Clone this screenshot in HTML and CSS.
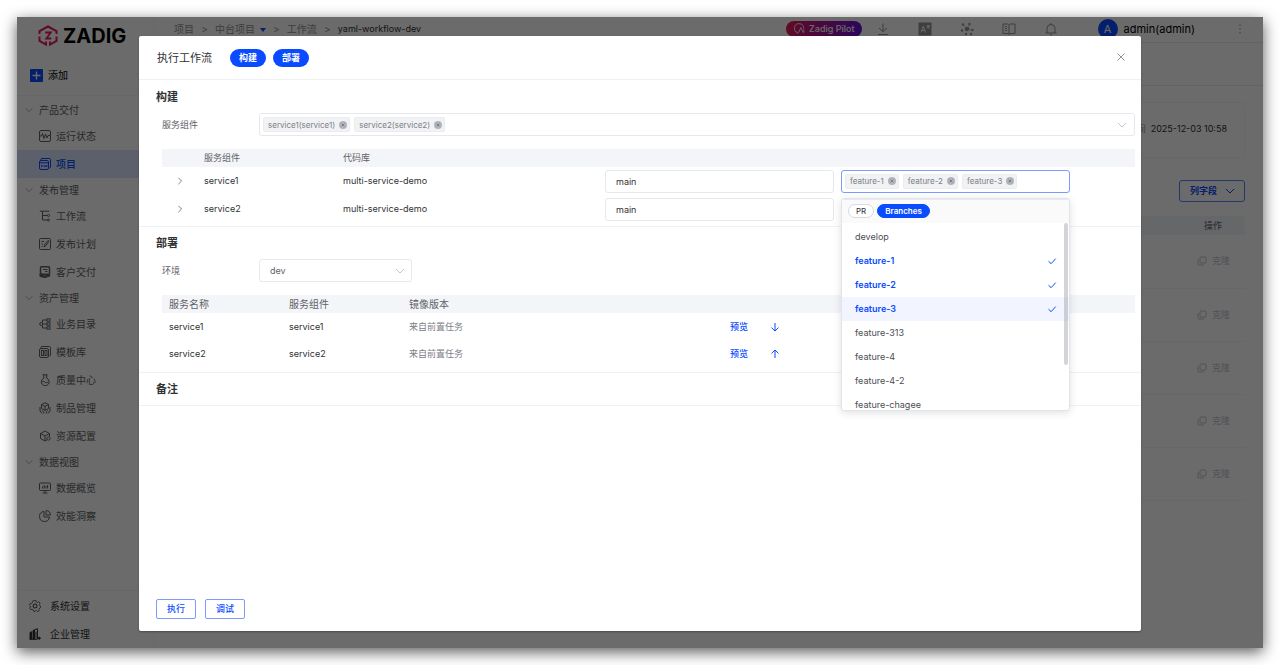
FILE: index.html
```html
<!DOCTYPE html>
<html lang="zh-CN">
<head>
  <meta charset="UTF-8">
  <meta name="viewport" content="width=device-width, initial-scale=1.0">
  <title>Zadig - 执行工作流</title>
  <link rel="stylesheet" href="styles.css">
</head>
<body>
  <!-- shared icons -->
  <svg class="sprite" aria-hidden="true">
    <symbol id="i-down" viewBox="0 0 10 10"><path d="M1 3L5 7l4-4"/></symbol>
    <symbol id="i-right" viewBox="0 0 10 10"><path d="M3 1L7 5 3 9"/></symbol>
    <symbol id="i-check" viewBox="0 0 10 10"><path d="M1.500 5.200l2.600 2.500L8.700 2.600"/></symbol>
    <symbol id="i-copy" viewBox="0 0 10 10"><rect x="3" y="1" width="6" height="6" rx="1"/><path d="M2 3.200c-.6.200-1 .6-1 1.200V8a1 1 0 0 0 1 1h3.800c.6 0 1-.4 1.200-1"/></symbol>
    <symbol id="i-tagx" viewBox="0 0 8 8"><circle cx="4" cy="4" r="4" fill="#b1b4bb" stroke="none"/><path d="M2.600 2.600l2.800 2.800M5.400 2.600L2.600 5.400" stroke="#7d8087"/></symbol>
  </svg>

  <div class="window">
    <aside class="sidebar">
      <div class="logo">
        <svg width="20" height="22" viewBox="0 0 20 22"><path d="M1.500 9V6.200L10 1.500l8.500 4.700V9M1.500 11.500v4.300l6.500 3.700v-3M18.500 11.500v4.300L12 19.500v-3" fill="none" stroke="#e6195a" stroke-width="2"/><path d="M7.200 7.500h5.600l-4.500 6h4.900" fill="none" stroke="#e6195a" stroke-width="1.800"/></svg>
        <span>ZADIG</span>
      </div>
      <button class="add-btn">
        <svg width="13" height="13" viewBox="0 0 13 13"><rect width="13" height="13" rx="1" fill="#0a4bff"/><path d="M6.500 2.500v8M2.500 6.500h8" stroke="#fff" stroke-width="1.300"/></svg>
        添加
      </button>
      <nav class="menu">
        <div class="group"><svg><use href="#i-down"/></svg>产品交付</div>
        <a class="item" href="#"><svg viewBox="0 0 12 12"><rect x=".5" y=".5" width="11" height="11" rx="1.500"/><path d="M1 6h1.500l1-2.500L5 8.500 6.500 4 8 8l1-2.500h2"/></svg>运行状态</a>
        <a class="item active" href="#"><svg viewBox="0 0 12 12"><rect x=".5" y="2.500" width="9" height="9" rx="1.500"/><path d="M1 4.800h8.500M2 2.500V1.500c0-.6.4-1 1-1h7.500c.6 0 1 .4 1 1V9c0 .6-.4 1-1 1M2.500 9V7.500h1.200M5 9V7.500M6.300 9V7.500l.8.800.8-.800V9"/></svg>项目</a>
        <div class="group"><svg><use href="#i-down"/></svg>发布管理</div>
        <a class="item" href="#"><svg viewBox="0 0 12 12"><path d="M.8 1.200h9.500M3.500 1.200V10h5M3.500 5.500h5"/><circle cx="9.500" cy="5.500" r="1"/><circle cx="9.500" cy="10" r="1"/></svg>工作流</a>
        <a class="item" href="#"><svg viewBox="0 0 12 12"><rect x=".5" y=".5" width="11" height="11" rx="1"/><path d="M2.500 3.500H5M2.500 6h1.500M2.500 8.500h1M5 9l.5-2L9 2.500l1 .8L6.500 8z"/></svg>发布计划</a>
        <a class="item" href="#"><svg viewBox="0 0 12 12"><rect x="1.500" y=".8" width="9" height="7.500" rx="1" stroke-width="1.500"/><path d="M4 3.500h4.500M6 5.500h2.500"/><path d="M.8 8l3 .5 2 1.500 5-1.500v1.500L6 11.500 1 10.500z" fill="currentColor"/></svg>客户交付</a>
        <div class="group"><svg><use href="#i-down"/></svg>资产管理</div>
        <a class="item" href="#"><svg viewBox="0 0 12 12"><circle cx="2.200" cy="6" r="1.500"/><path d="M3.700 6H8M8 2H3.500v2.500M8 10H3.500V7.500"/><rect x="8" y=".8" width="3" height="2.400"/><rect x="8" y="4.800" width="3" height="2.400"/><rect x="8" y="8.800" width="3" height="2.400"/></svg>业务目录</a>
        <a class="item" href="#"><svg viewBox="0 0 12 12"><rect x=".5" y="2.500" width="9" height="9" rx="1.500"/><path d="M2 2.500V1.500c0-.6.4-1 1-1h7.500c.6 0 1 .4 1 1V9c0 .6-.4 1-1 1"/><rect x="2.500" y="4.500" width="2" height="5"/><rect x="6" y="4.500" width="2" height="5"/></svg>模板库</a>
        <a class="item" href="#"><svg viewBox="0 0 12 12"><path d="M3.500.8h5M4.800.8v3.400a3.900 3.900 0 1 0 2.900 0V.8M2.500 8.200c1.500-1.200 2.500-.8 3.500 0s2 .8 3.500-.8"/></svg>质量中心</a>
        <a class="item" href="#"><svg viewBox="0 0 12 12"><path d="M6 .7L2.500 2.500v4L6 8.300l3.500-1.800v-4zM2.500 2.500L6 4.300l3.500-1.800M6 4.300v4M1 5v4l2 2.500M11 5v4l-2 2.500M4.700 11.500V10L3 8.300M7.300 11.500V10L9 8.300"/></svg>制品管理</a>
        <a class="item" href="#"><svg viewBox="0 0 12 12"><path d="M10.500 6.500V3.500L6 1 1.500 3.500v5L6 11l2-1.100M1.500 3.500L6 6l4.500-2.500M6 6v5"/><circle cx="9.500" cy="8.500" r="1.600"/></svg>资源配置</a>
        <div class="group"><svg><use href="#i-down"/></svg>数据视图</div>
        <a class="item" href="#"><svg viewBox="0 0 12 12"><rect x=".5" y="1" width="11" height="7.500" rx="1"/><path d="M6 8.500V11M3.500 11h5M3.500 6.500v-2M5.200 6.500V3M7 6.500V4M8.600 6.500V3"/></svg>数据概览</a>
        <a class="item" href="#"><svg viewBox="0 0 12 12"><path d="M5 1.500A5 5 0 1 0 10.500 7H5z"/><path d="M7 .6V5h4.400A4.500 4.500 0 0 0 7 .6z"/></svg>效能洞察</a>
      </nav>
      <div class="bottom">
        <a class="item" href="#"><svg viewBox="0 0 12 12"><circle cx="6" cy="6" r="2"/><path d="M5 .6h2l.4 1.500 1 .4 1.400-.8 1.300 1.500-.8 1.300.3 1 1 .5-.1 1.700-1.200.5-.5 1 .5 1.300-1.600 1.100-1.200-.9-1 .1L6 11.500l-1.500-.4-.4-1.400-1-.5-1.400.5-1-1.600.9-1.200L1.500 6 .5 5.200l.6-1.800 1.500.1.800-.8-.1-1.400z" stroke-width=".7"/></svg>系统设置</a>
        <a class="item" href="#"><svg viewBox="0 0 12 12"><path d="M1 11V4.500l1.500-.8V11zM4 11V2.500L5.500 1.800V11z" fill="currentColor"/><path d="M5.500 1.800L8.500.7V11M7 3.500v7M.5 11.300h8"/><circle cx="10.300" cy="10.200" r="1" fill="currentColor"/></svg>企业管理</a>
      </div>
    </aside>

    <div class="main">
      <header class="topbar">
        <div class="crumbs">
          <a href="#">项目</a><i>&gt;</i><a href="#">中台项目 <b></b></a><i>&gt;</i><a href="#">工作流</a><i>&gt;</i><span>yaml-workflow-dev</span>
        </div>
        <div class="tools">
          <button class="pilot"><svg width="11" height="11" viewBox="0 0 12 12"><path d="M4 10.500A5 5 0 1 1 10.500 6M5 10.500L7.500 5l2.500 5.500M10.800 7v3.500M4 10.500l-.5 1"/></svg>Zadig Pilot</button>
          <svg viewBox="0 0 14 14"><path d="M7 1.500v8M3 6L7 9.500 11 6M2 12.500h10"/></svg>
          <svg viewBox="0 0 14 14"><rect x="1" y="1" width="12" height="12" fill="#909399"/><path d="M3 10.500l2.300-6.500 2.300 6.500M3.800 8.500h3M8.500 4h3.500M10.200 3v1M9 6.500L11.500 4M9 4.500l2.500 2" stroke="#fff"/></svg>
          <svg viewBox="0 0 14 14"><circle cx="7" cy="7" r="1.800" fill="currentColor"/><g fill="currentColor" stroke="none"><circle cx="3" cy="2.500" r="1.200"/><circle cx="9.500" cy="2" r="1.200"/><circle cx="12.500" cy="8" r="1.200"/><circle cx="2" cy="8.500" r="1.200"/><circle cx="6" cy="12" r="1.200"/><circle cx="11" cy="12" r="1.200"/></g><path d="M7 7L3 2.500M7 7l2.500-5M7 7l5.500 1" stroke-width=".5"/></svg>
          <svg viewBox="0 0 14 14"><path d="M7 3c-.5-.9-1-1-2-1H1v9.500h4c1 0 1.500.3 2 1 .5-.7 1-1 2-1h4V2H9c-1 0-1.500.1-2 1zM7 3v9.500M3 4.500h2M3 6.500h2M3 8.500h2"/></svg>
          <svg viewBox="0 0 14 14"><path d="M3 11V6.500a4 4 0 0 1 8 0V11M1.500 11h11M7 1v1.500M6 12.800h2"/></svg>
          <span class="user"><span class="avatar">A</span>admin(admin)</span>
          <svg class="dots" viewBox="0 0 8 14"><path d="M4 2.500V4M4 6.200v1.500M4 10v1.500"/></svg>
        </div>
      </header>
      <div class="band"></div>
      <div class="page">
        <div class="info-card"><span>时间</span>2025-12-03 10:58</div>
        <button class="cols-btn">列字段<svg class="line"><use href="#i-down"/></svg></button>
        <table class="tasks">
          <thead><tr><th>操作</th></tr></thead>
          <tbody>
            <tr><td><button><svg class="line"><use href="#i-copy"/></svg>克隆</button></td></tr>
            <tr><td><button><svg class="line"><use href="#i-copy"/></svg>克隆</button></td></tr>
            <tr><td><button><svg class="line"><use href="#i-copy"/></svg>克隆</button></td></tr>
            <tr><td><button><svg class="line"><use href="#i-copy"/></svg>克隆</button></td></tr>
            <tr><td><button><svg class="line"><use href="#i-copy"/></svg>克隆</button></td></tr>
          </tbody>
        </table>
      </div>
    </div>

    <div class="mask">
      <div class="dialog" role="dialog" aria-labelledby="dialog-title">
        <div class="dialog-header">
          <h2 id="dialog-title">执行工作流</h2>
          <button class="stage">构建</button>
          <button class="stage">部署</button>
          <button class="close" aria-label="关闭"><svg viewBox="0 0 10 10"><path d="M1.500 1.500l7 7M8.500 1.500l-7 7"/></svg></button>
        </div>

        <section>
          <h3>构建</h3>
          <div class="form-row">
            <label for="services">服务组件</label>
            <div class="select wide">
              <span class="tag">service1(service1)<button aria-label="移除"><svg><use href="#i-tagx"/></svg></button></span>
              <span class="tag">service2(service2)<button aria-label="移除"><svg><use href="#i-tagx"/></svg></button></span>
              <input type="text" id="services">
              <svg class="line caret"><use href="#i-down"/></svg>
            </div>
          </div>
          <table class="build">
            <colgroup><col class="c-expand"><col class="c-service"><col class="c-repo"><col><col><col class="c-end"></colgroup>
            <thead><tr><th></th><th>服务组件</th><th>代码库</th><th></th><th></th><th></th></tr></thead>
            <tbody>
              <tr>
                <td class="expand"><button aria-label="展开"><svg><use href="#i-right"/></svg></button></td>
                <td>service1</td>
                <td>multi-service-demo</td>
                <td><input class="field" type="text" value="main" aria-label="service1 分支"></td>
                <td>
                  <div class="select focus">
                    <span class="tag">feature-1<button aria-label="移除"><svg><use href="#i-tagx"/></svg></button></span>
                    <span class="tag">feature-2<button aria-label="移除"><svg><use href="#i-tagx"/></svg></button></span>
                    <span class="tag">feature-3<button aria-label="移除"><svg><use href="#i-tagx"/></svg></button></span>
                    <input type="text" aria-label="选择分支">
                    <div class="dropdown">
                      <div class="switch">
                        <button>PR</button>
                        <button class="on">Branches</button>
                      </div>
                      <ul role="listbox" aria-label="Branches">
                        <li role="option">develop</li>
                        <li role="option" class="selected">feature-1<svg class="line"><use href="#i-check"/></svg></li>
                        <li role="option" class="selected">feature-2<svg class="line"><use href="#i-check"/></svg></li>
                        <li role="option" class="selected hover">feature-3<svg class="line"><use href="#i-check"/></svg></li>
                        <li role="option">feature-313</li>
                        <li role="option">feature-4</li>
                        <li role="option">feature-4-2</li>
                        <li role="option">feature-chagee</li>
                      </ul>
                      <div class="thumb"></div>
                    </div>
                  </div>
                </td>
                <td></td>
              </tr>
              <tr>
                <td class="expand"><button aria-label="展开"><svg><use href="#i-right"/></svg></button></td>
                <td>service2</td>
                <td>multi-service-demo</td>
                <td><input class="field" type="text" value="main" aria-label="service2 分支"></td>
                <td></td>
                <td></td>
              </tr>
            </tbody>
          </table>
        </section>

        <section>
          <h3>部署</h3>
          <div class="form-row">
            <label for="env">环境</label>
            <div class="native">
              <select id="env"><option>dev</option></select>
              <svg class="line caret"><use href="#i-down"/></svg>
            </div>
          </div>
          <table class="deploy">
            <colgroup><col class="c-name"><col class="c-name"><col class="c-image"><col class="c-preview"><col></colgroup>
            <thead><tr><th>服务名称</th><th>服务组件</th><th>镜像版本</th><th></th><th></th></tr></thead>
            <tbody>
              <tr>
                <td>service1</td><td>service1</td><td class="muted">来自前置任务</td>
                <td><a href="#">预览</a></td>
                <td><button aria-label="下移"><svg class="line" viewBox="0 0 10 10"><path d="M5 1v8M1.500 5.600L5 9l3.500-3.400"/></svg></button></td>
              </tr>
              <tr>
                <td>service2</td><td>service2</td><td class="muted">来自前置任务</td>
                <td><a href="#">预览</a></td>
                <td><button aria-label="上移"><svg class="line" viewBox="0 0 10 10"><path d="M5 9V1M1.500 4.400L5 1l3.500 3.400"/></svg></button></td>
              </tr>
            </tbody>
          </table>
        </section>

        <section class="remark">
          <h3>备注</h3>
        </section>

        <div class="dialog-footer">
          <button>执行</button>
          <button>调试</button>
        </div>
      </div>
    </div>
  </div>
</body>
</html>
```

FILE: styles.css
```css
* {
  box-sizing: border-box;
}

body {
  margin: 0;
  padding: 17px;
  background: #fff;
  font-family: Inter, "Noto Sans CJK SC", sans-serif;
  font-size: 10px;
  line-height: 14px;
  color: #303133;
}

button,
input,
select {
  font: inherit;
  color: inherit;
}

button {
  padding: 0;
  border: none;
  background: none;
  cursor: pointer;
}

a {
  color: inherit;
  text-decoration: none;
}

h2,
h3,
ul {
  margin: 0;
  padding: 0;
}

svg {
  display: block;
  flex: none;
  fill: none;
  stroke: currentColor;
}

.sprite {
  position: absolute;
  width: 0;
  height: 0;
}

.line {
  width: 10px;
  height: 10px;
}

.window {
  position: relative;
  display: flex;
  min-height: calc(100vh - 34px);
  background: #fff;
  box-shadow: 0 4px 14px rgba(0, 0, 0, 0.65);
}

/* sidebar */
.sidebar {
  display: flex;
  flex-direction: column;
  width: 137px;
  border-right: 1px solid #f8f8f8;
  color: #606266;
}

.logo {
  display: flex;
  align-items: center;
  gap: 5px;
  height: 38px;
  padding-left: 21px;
  color: #000;
  font-size: 20px;
  font-weight: 700;
  line-height: 24px;
}

.logo svg {
  stroke: none;
}

.add-btn {
  display: flex;
  align-items: center;
  gap: 5px;
  height: 41px;
  padding-left: 13px;
  border-bottom: 1px solid #f5f5f5;
  color: #303133;
  font-weight: 500;
}

.add-btn svg {
  stroke: none;
}

.menu {
  flex: 1;
  padding-top: 2px;
}

.group {
  display: flex;
  align-items: center;
  gap: 6px;
  height: 24px;
  padding-left: 8px;
}

.group svg {
  width: 8px;
  height: 8px;
  color: #909399;
}

.item {
  display: flex;
  align-items: center;
  gap: 5px;
  height: 28px;
  padding-left: 22px;
}

.item svg {
  width: 12px;
  height: 12px;
}

.item.active {
  background: #d9e5ff;
  color: #0a4bff;
  font-weight: 500;
}

.bottom {
  padding-top: 1px;
  border-top: 1px solid #f5f5f5;
  color: #303133;
}

.bottom .item {
  gap: 9px;
  padding-left: 12px;
}

/* page behind the dialog */
.main {
  flex: 1;
}

.topbar {
  display: flex;
  justify-content: space-between;
  height: 26px;
  padding: 0 19px 2px 20px;
  border-bottom: 1px solid #ececec;
  color: #909399;
}

.crumbs,
.tools,
.user {
  display: flex;
  align-items: center;
}

.crumbs i {
  width: 21px;
  text-align: center;
  font-style: normal;
}

.crumbs b {
  display: inline-block;
  margin-left: 2px;
  border: 3px solid transparent;
  border-top: 4px solid #0a4bff;
  border-bottom: none;
  vertical-align: middle;
}

.crumbs span {
  color: #303133;
  font-size: 9px;
}

.tools {
  gap: 28px;
}

.tools > svg {
  width: 14px;
  height: 14px;
}

.tools > .dots {
  width: 8px;
  margin-left: 13px;
}

.pilot {
  display: flex;
  align-items: center;
  gap: 4px;
  height: 16px;
  margin-right: -14px;
  padding: 0 7px 0 8px;
  border-radius: 8px;
  background: linear-gradient(90deg, #e6195a, #6a0fd8);
  color: #fff;
  font-size: 9px;
  font-weight: 500;
}

.user {
  gap: 6px;
  margin-left: 12px;
  color: #000;
  font-size: 11px;
}

.avatar {
  width: 20px;
  height: 20px;
  border-radius: 50%;
  background: #0a4bff;
  color: #fff;
  line-height: 20px;
  text-align: center;
}

.band {
  height: 43px;
  border-bottom: 1px solid #ececec;
}

.page {
  display: flex;
  flex-direction: column;
  align-items: flex-end;
  padding: 16px 18px 0;
}

.info-card {
  display: flex;
  align-items: center;
  justify-content: flex-end;
  gap: 5px;
  width: 100%;
  height: 56px;
  padding: 0 17px 2px 0;
  border: 1px solid #f5f5f5;
  border-radius: 4px;
  font-size: 9px;
}

.info-card span {
  color: #909399;
}

.cols-btn {
  display: flex;
  align-items: center;
  gap: 8px;
  height: 22px;
  margin: 22px 0 14px;
  padding: 0 9px 0 10px;
  border: 1px solid #5c85ff;
  border-radius: 3px;
  color: #0a4bff;
  font-size: 9px;
  font-weight: 700;
}

table {
  width: 100%;
  border-collapse: collapse;
  table-layout: fixed;
}

.tasks th {
  height: 19px;
  padding: 0 23px 0 0;
  background: #f3f5fa;
  color: #606266;
  font-size: 9px;
  font-weight: 400;
  text-align: right;
}

.tasks td {
  height: 53px;
  padding: 0 15px 0 0;
  border-bottom: 1px solid #f5f5f5;
}

.tasks button {
  display: flex;
  align-items: center;
  gap: 5px;
  margin-left: auto;
  color: #c0c4cc;
  font-size: 9px;
}

/* dialog */
.mask {
  position: absolute;
  inset: 0;
  display: flex;
  padding: 19px 122px 17px;
  background: rgba(0, 0, 0, 0.58);
}

.dialog {
  display: flex;
  flex: 1;
  flex-direction: column;
  border-radius: 2px;
  background: #fff;
  box-shadow: 0 1px 2px rgba(0, 0, 0, 0.3);
}

.dialog-header {
  display: flex;
  align-items: center;
  height: 44px;
  padding: 0 15px 0 18px;
  border-bottom: 1px solid #f0f1f3;
}

.dialog-header h2 {
  margin-right: 18px;
  font-size: 11px;
  font-weight: 400;
}

.stage {
  width: 36px;
  height: 18px;
  margin-right: 7px;
  border-radius: 9px;
  background: #0a4bff;
  color: #fff;
  font-size: 9px;
  font-weight: 700;
}

.close {
  margin-left: auto;
  padding-bottom: 2px;
  color: #909399;
}

.close svg {
  width: 10px;
  height: 10px;
}

section {
  padding: 9px 6px 3px 23px;
  border-bottom: 1px solid #f0f1f3;
}

section + section {
  padding: 8px 6px 5px 23px;
}

section.remark {
  padding-bottom: 8px;
}

section h3 {
  margin-left: -6px;
  font-size: 11px;
  font-weight: 700;
  line-height: 16px;
}

.form-row {
  display: flex;
  align-items: center;
  margin: 8px 0 13px;
  color: #606266;
}

.form-row label {
  width: 97px;
  font-size: 9px;
}

.select {
  position: relative;
  display: flex;
  align-items: center;
  gap: 4px;
  height: 23px;
  padding: 0 7px 0 3px;
  border: 1px solid #e6e8ed;
  border-radius: 3px;
}

.select.wide {
  flex: 1;
}

.select.focus {
  border-color: #7b9bff;
}

.select > input {
  flex: 1;
  min-width: 0;
  padding: 0;
  border: none;
  outline: none;
  background: none;
}

.tag {
  display: flex;
  align-items: center;
  gap: 4px;
  height: 15px;
  padding: 0 2px 0 4px;
  border: 1px solid #ebecef;
  border-radius: 2px;
  background: #f1f2f4;
  color: #7d8087;
  font-size: 8px;
}

.tag svg {
  width: 8px;
  height: 8px;
}

.caret {
  color: #c0c4cc;
}

.native {
  display: grid;
  align-items: center;
  width: 153px;
}

.native select,
.native .caret {
  grid-area: 1 / 1;
}

.native .caret {
  justify-self: end;
  margin-right: 7px;
  pointer-events: none;
}

.native select {
  width: 100%;
  height: 23px;
  padding: 0 10px;
  border: 1px solid #e6e8ed;
  border-radius: 3px;
  background: #fff;
  font-size: 9px;
  appearance: none;
}

.dialog th {
  height: 18px;
  padding: 0;
  background: #f4f5f9;
  color: #606266;
  font-weight: 400;
  text-align: left;
}

.dialog td {
  padding: 0;
  font-size: 9px;
}

.build th {
  font-size: 9px;
}

.build td {
  height: 28px;
}

.c-expand {
  width: 42px;
}

.c-service {
  width: 139px;
}

.c-repo {
  width: 262px;
}

.c-end {
  width: 58px;
}

.expand button {
  display: block;
  margin-left: 14px;
  color: #606266;
}

.expand svg {
  width: 8px;
  height: 8px;
}

.build .field,
.build .select {
  width: calc(100% - 7px);
}

.field {
  display: block;
  height: 23px;
  padding: 0 10px;
  border: 1px solid #e6e8ed;
  border-radius: 3px;
  color: #303133;
}

.deploy th,
.deploy td {
  padding-left: 7px;
}

.deploy td {
  height: 27px;
}

.deploy .muted {
  color: #7d8087;
}

.deploy a,
.deploy button {
  display: block;
  color: #0a4bff;
  font-weight: 500;
}

.c-name {
  width: 120px;
}

.c-image {
  width: 33%;
}

.c-preview {
  width: 40px;
}

/* branch dropdown */
.dropdown {
  position: absolute;
  top: 27px;
  left: -1px;
  right: -1px;
  z-index: 1;
  height: 213px;
  overflow: hidden;
  border: 1px solid #e1e4ea;
  border-radius: 3px;
  background: #fff;
  box-shadow: 0 2px 8px rgba(0, 0, 0, 0.12);
}

.switch {
  display: flex;
  align-items: center;
  gap: 3px;
  height: 24px;
  padding-left: 6px;
  border-top: 1px solid #e8eaee;
  background: #fafafa;
}

.switch button {
  height: 14px;
  padding: 0 7px;
  border: 1px solid #d8dade;
  border-radius: 7px;
  background: #fff;
  font-size: 8px;
  line-height: 12px;
}

.switch .on {
  border-color: #0a4bff;
  background: #0a4bff;
  color: #fff;
  font-weight: 600;
}

.dropdown ul {
  padding-top: 2px;
  list-style: none;
}

.dropdown li {
  display: flex;
  align-items: center;
  justify-content: space-between;
  height: 24px;
  padding: 0 12px 0 13px;
  color: #4c4e52;
  font-size: 9px;
}

.dropdown .selected {
  color: #0a4bff;
  font-weight: 600;
}

.dropdown .hover {
  background: #f2f5ff;
}

.thumb {
  position: absolute;
  top: 24px;
  right: 1px;
  width: 4px;
  height: 142px;
  border-radius: 2px;
  background: rgba(144, 147, 153, 0.4);
}

.dialog-footer {
  display: flex;
  gap: 9px;
  margin-top: auto;
  padding: 0 17px 12px;
}

.dialog-footer button {
  width: 40px;
  height: 20px;
  border: 1px solid #7b9bff;
  border-radius: 2px;
  color: #0a4bff;
  font-size: 9px;
  font-weight: 500;
}
```
